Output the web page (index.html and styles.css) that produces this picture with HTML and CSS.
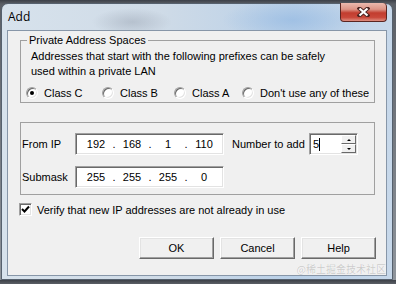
FILE: index.html
```html
<!DOCTYPE html>
<html lang="en">
<head>
    <meta charset="UTF-8">
    <title>Add</title>
    <link rel="stylesheet" href="styles.css">
</head>
<body>

<div class="window">

    <!-- Title bar -->
    <div class="titlebar">
        <span class="title">Add</span>
        <span class="close-btn">
            <svg width="13" height="10" viewBox="0 0 13 10">
                <path d="M2.5 1.5 L10.5 8.5 M10.5 1.5 L2.5 8.5" stroke="#4a2320" stroke-width="4" stroke-linecap="square"/>
                <path d="M2.5 1.5 L10.5 8.5 M10.5 1.5 L2.5 8.5" stroke="#fff" stroke-width="2.2"/>
            </svg>
        </span>
    </div>

    <div class="client">

        <!-- Private address spaces -->
        <fieldset class="group">
            <legend>Private Address Spaces</legend>
            <p class="note">Addresses that start with the following prefixes can be safely<br>used within a private LAN</p>
            <div class="radio-row">
                <label class="radio"><span class="dot checked"></span>Class C</label>
                <label class="radio"><span class="dot"></span>Class B</label>
                <label class="radio"><span class="dot"></span>Class A</label>
                <label class="radio"><span class="dot"></span>Don't use any of these</label>
            </div>
        </fieldset>

        <!-- Address range -->
        <div class="group2">
            <div class="row">
                <span class="lbl">From IP</span>
                <div class="ip-box">
                    <span class="oct">192</span><span class="sep">.</span>
                    <span class="oct">168</span><span class="sep">.</span>
                    <span class="oct">1</span><span class="sep">.</span>
                    <span class="oct">110</span>
                </div>
                <span class="num-lbl">Number to add</span>
                <div class="spin">
                    <span class="spin-val">5</span><span class="caret"></span>
                    <div class="spin-btns">
                        <span class="spin-btn"><span class="arrow-up"></span></span>
                        <span class="spin-btn"><span class="arrow-down"></span></span>
                    </div>
                </div>
            </div>
            <div class="row">
                <span class="lbl">Submask</span>
                <div class="ip-box">
                    <span class="oct">255</span><span class="sep">.</span>
                    <span class="oct">255</span><span class="sep">.</span>
                    <span class="oct">255</span><span class="sep">.</span>
                    <span class="oct">0</span>
                </div>
            </div>
        </div>

        <label class="check">
            <span class="box">
                <svg width="9" height="9" viewBox="0 0 9 9"><path d="M1 4 L3.5 6.5 L8 1.5" fill="none" stroke="#000" stroke-width="2"/></svg>
            </span>
            Verify that new IP addresses are not already in use
        </label>

        <div class="buttons">
            <button type="button">OK</button>
            <button type="button">Cancel</button>
            <button type="button">Help</button>
        </div>

        <div class="watermark">@稀土掘金技术社区</div>
    </div>
</div>

</body>
</html>
```

FILE: styles.css
```css
body {
    margin: 0;
    background: linear-gradient(#3c4048 0, #5b5f66 4px, #8f959c 100%);
    font-family: "Liberation Sans", Arial, sans-serif;
    font-size: 11px;
    color: #000;
}

.window {
    width: 392px;
    height: 277px;
    margin: 3px 0 0 1px;
    box-sizing: border-box;
    border: 1px solid #56616e;
    border-radius: 7px 7px 0 0;
    background:
        radial-gradient(ellipse 40px 14px at 130px 18px, rgba(150,160,175,0.45), transparent),
        radial-gradient(ellipse 70px 20px at 290px 16px, rgba(140,180,225,0.55), transparent),
        linear-gradient(90deg, #d7e2ec 0%, #cfdbe7 40%, #b9d0e8 75%, #c7d8ea 100%);
    display: flex;
    flex-direction: column;
}

.titlebar {
    height: 26px;
    display: flex;
    align-items: flex-start;
}

.title {
    margin: 5px 0 0 6px;
    font-family: "Open Sans", "Noto Sans", sans-serif;
    font-size: 12px;
    line-height: 16px;
    color: #000;
}

.close-btn {
    margin: -1px 5px 0 auto;
    width: 47px;
    height: 19px;
    box-sizing: border-box;
    border: 1px solid #5b2520;
    border-top: none;
    border-radius: 0 4px 4px 4px;
    background: linear-gradient(#eab9ae 0%, #dc9486 35%, #c23d2f 55%, #c9483a 80%, #df8e80 100%);
    display: flex;
    align-items: center;
    justify-content: center;
}

.close-btn svg {
    display: block;
}

.client {
    margin: 0 5px;
    height: 246px;
    box-sizing: border-box;
    border: 1px solid #8796a8;
    background: #f0f0f0;
}

/* group boxes */
.group {
    margin: 3px 11px 0 12px;
    padding: 0 0 1px 5px;
    border: 1px solid #a0a0a0;
    min-width: 0;
}

.group legend {
    padding: 0 2px;
    margin-left: 1px;
    line-height: 13px;
}

.note {
    margin: 2px 0 0 5px;
    line-height: 15px;
}

.radio-row {
    display: grid;
    grid-template-columns: 76px 72px 68px auto;
    align-items: center;
    height: 16px;
    margin-top: 6px;
    white-space: nowrap;
}

.radio {
    display: flex;
    align-items: center;
}

.dot {
    position: relative;
    flex: none;
    width: 12px;
    height: 12px;
    margin-right: 6px;
    box-sizing: border-box;
    border-radius: 50%;
    background: #fff;
    border: 1px solid;
    border-color: #a0a0a0 #fff #fff #a0a0a0;
    box-shadow: inset 1px 1px 0 #696969, inset -1px -1px 0 #e3e3e3;
}

.dot.checked::after {
    content: "";
    position: absolute;
    left: 3px;
    top: 3px;
    width: 4px;
    height: 4px;
    border-radius: 50%;
    background: #000;
}

.group2 {
    margin: 19px 11px 0 12px;
    padding: 10px 0 6px 1px;
    border: 1px solid #a0a0a0;
}

.row {
    display: flex;
    align-items: center;
    height: 22px;
}

.row + .row {
    margin-top: 11px;
}

.lbl {
    width: 53px;
}

.ip-box {
    width: 149px;
    height: 22px;
    box-sizing: border-box;
    display: flex;
    align-items: center;
    padding-left: 7px;
    background: #fff;
    border: 1px solid;
    border-color: #a0a0a0 #fff #fff #a0a0a0;
    box-shadow: inset 1px 1px 0 #696969, inset -1px -1px 0 #e3e3e3;
}

.oct {
    width: 26px;
    text-align: center;
}

.sep {
    width: 10px;
    text-align: center;
}

.num-lbl {
    margin-left: 8px;
    width: 77px;
}

.spin {
    width: 49px;
    height: 22px;
    box-sizing: border-box;
    display: flex;
    align-items: center;
    background: #fff;
    border: 1px solid;
    border-color: #a0a0a0 #fff #fff #a0a0a0;
    box-shadow: inset 1px 1px 0 #696969, inset -1px -1px 0 #e3e3e3;
}

.spin-val {
    padding-left: 3px;
}

.caret {
    width: 1px;
    height: 13px;
    background: #000;
}

.spin-btns {
    margin: 0 1px 0 auto;
    display: flex;
    flex-direction: column;
}

.spin-btn {
    width: 15px;
    height: 9px;
    box-sizing: border-box;
    background: #f0f0f0;
    border: 1px solid;
    border-color: #fff #696969 #696969 #fff;
    display: flex;
    align-items: center;
    justify-content: center;
}

.arrow-up {
    border-left: 2px solid transparent;
    border-right: 2px solid transparent;
    border-bottom: 2px solid #000;
}

.arrow-down {
    border-left: 2px solid transparent;
    border-right: 2px solid transparent;
    border-top: 2px solid #000;
}

/* checkbox */
.check {
    display: flex;
    align-items: center;
    height: 13px;
    margin: 8px 0 0 11px;
}

.box {
    width: 13px;
    height: 13px;
    margin-right: 5px;
    box-sizing: border-box;
    background: #fff;
    border: 1px solid;
    border-color: #a0a0a0 #fff #fff #a0a0a0;
    box-shadow: inset 1px 1px 0 #696969, inset -1px -1px 0 #e3e3e3;
    display: flex;
    align-items: center;
    justify-content: center;
}

.box svg {
    display: block;
}

.buttons {
    display: flex;
    justify-content: flex-end;
    gap: 6px;
    margin: 21px 10px 0 0;
}

button {
    width: 75px;
    height: 22px;
    padding: 0;
    font-family: "Liberation Sans", Arial, sans-serif;
    font-size: 11px;
    color: #000;
    background: #f0f0f0;
    border: 1px solid;
    border-color: #fff #696969 #696969 #fff;
    box-shadow: inset -1px -1px 0 #a0a0a0, inset 1px 1px 0 #e3e3e3;
}

.watermark {
    margin-top: 5px;
    text-align: right;
    font-family: "Noto Sans CJK SC", sans-serif;
    font-size: 10px;
    line-height: 10px;
    color: rgba(0, 0, 0, 0.16);
}
```
